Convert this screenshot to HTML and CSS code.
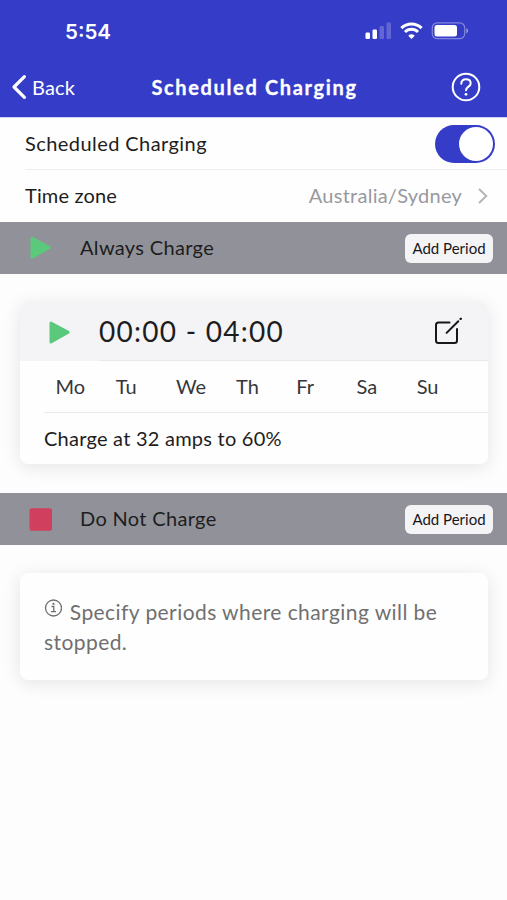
FILE: index.html
```html
<!DOCTYPE html>
<html lang="en">
<head>
<meta charset="utf-8">
<title>Scheduled Charging</title>
<link rel="stylesheet" href="styles.css">
</head>
<body>
<header class="header">
  <div class="status">
    <span class="clock">5:54</span>
    <svg class="status-icons" width="104" height="20" viewBox="0 0 104 20" fill="#fff">
      <rect x="0.5" y="10.5" width="4.5" height="6.5" rx="1.2"/>
      <rect x="7.5" y="7.5" width="4.5" height="9.5" rx="1.2"/>
      <rect x="14.5" y="4" width="4.5" height="13" rx="1.2" opacity=".22"/>
      <rect x="21.5" y="0.5" width="4.5" height="16.5" rx="1.2" opacity=".22"/>
      <g fill="none" stroke="#fff" stroke-width="3">
        <path d="M36.4 6.1a14.3 14.3 0 0 1 20.2 0"/>
        <path d="M40 10a9.2 9.2 0 0 1 13 0"/>
      </g>
      <path d="M46.5 17l-3.2-3.3a4.5 4.5 0 0 1 6.4 0z"/>
      <rect x="67.3" y="0.8" width="32.4" height="15.9" rx="5" fill="none" stroke="#fff" stroke-width="1.2" opacity=".38"/>
      <rect x="69.5" y="3" width="22.5" height="11.5" rx="2.5"/>
      <path d="M101.3 6.2v5.2q1.8-.8 1.8-2.6t-1.8-2.6z" opacity=".5"/>
    </svg>
  </div>
  <nav class="nav">
    <a class="back">
      <svg width="16" height="26" viewBox="0 0 16 26" fill="none" stroke="#fff" stroke-width="3.2" stroke-linecap="round" stroke-linejoin="round"><path d="M13.4 2.6L3 13 13.4 23.4"/></svg>
      <span class="back-label">Back</span>
    </a>
    <h1 class="title">Scheduled Charging</h1>
    <svg class="help" width="30" height="30" viewBox="0 0 30 30" fill="none" stroke="#fff" stroke-width="2" stroke-linecap="round">
      <circle cx="15" cy="15" r="13.3"/>
      <path d="M10.3 11.8q0-4.6 4.7-4.6t4.7 4.2c0 3.2-4.700 3.200-4.700 6.800"/>
      <circle cx="15" cy="22.3" r="1.4" fill="#fff" stroke="none"/>
    </svg>
  </nav>
</header>
<main>
  <div class="row">
    <div class="row-inner ruled"><span class="t-sched">Scheduled Charging</span><span class="toggle"><span class="knob"></span></span></div>
  </div>
  <div class="row">
    <div class="row-inner zone"><span class="t-zone">Time zone</span><span class="value">Australia/Sydney</span>
      <svg width="10" height="16" viewBox="0 0 10 16" fill="none" stroke="#b4b5ba" stroke-width="1.9"><path d="M1 1l7.3 7L1 15"/></svg>
    </div>
  </div>
  <section>
    <div class="bar">
      <svg class="mark" width="24" height="26" viewBox="0 0 24 26"><path d="M3 3.2L20.2 12.5 3 22.3z" fill="#5bc97b" stroke="#5bc97b" stroke-width="3" stroke-linejoin="round"/></svg>
      <h2 class="t-always">Always Charge</h2>
      <button class="add">Add Period</button>
    </div>
    <article class="card period">
      <div class="card-head">
        <svg class="mark" width="24" height="26" viewBox="0 0 24 26"><path d="M3 4L20.2 13.3 3 23z" fill="#5bc97b" stroke="#5bc97b" stroke-width="3" stroke-linejoin="round"/></svg>
        <div class="head-main">
          <span class="time">00:00 - 04:00</span>
          <svg class="edit" width="28" height="28" viewBox="0 0 28 28" fill="none" stroke="#17171b" stroke-width="2" stroke-linecap="round" stroke-linejoin="round"><path d="M15.5 5.500H4.500Q2 5.500 2 8V23.500Q2 26 4.500 26H20.500Q23 26 23 23.500V12M12.600 15.900L24.300 4.200"/><path d="M26.600 1.900l.2-.2" stroke-width="2.300"/></svg>
        </div>
      </div>
      <div class="days"><span>Mo</span><span>Tu</span><span>We</span><span>Th</span><span>Fr</span><span>Sa</span><span>Su</span></div>
      <p class="rate">Charge at 32 amps to 60%</p>
    </article>
  </section>
  <section>
    <div class="bar">
      <svg class="mark" width="24" height="26" viewBox="0 0 24 26"><rect x="0.5" y="2.3" width="22.5" height="22.5" rx="2" fill="#d0405e"/></svg>
      <h2 class="t-dont">Do Not Charge</h2>
      <button class="add">Add Period</button>
    </div>
    <article class="card note">
      <svg class="info" width="18" height="18" viewBox="0 0 18 18" fill="none" stroke="#707070" stroke-width="1.3"><circle cx="9.5" cy="9" r="8"/><path d="M7.5 7.5h2.3v5M7 12.7h5"/><circle cx="9.5" cy="4.9" r="1.1" fill="#707070" stroke="none"/></svg>
      <span class="note-a">Specify periods where charging will be</span><br><span class="note-b">stopped.</span>
    </article>
  </section>
</main>
</body>
</html>
```
FILE: styles.css
```css
* { box-sizing: border-box; margin: 0; }
body { background: #fdfdfd; color: #1d1d20; font: 400 20px/24px Lato, "Open Sans", sans-serif; white-space: nowrap; overflow: hidden; }
svg { display: block; flex: none; }
.header { height: 118px; background: #353cc7; color: #fff; border-bottom: 1px solid #cfd2fb; }
.status { height: 62px; display: flex; justify-content: space-between; align-items: center; padding: 0 38px 0 65px; }
.clock { font: 600 20.5px/24px Inter, sans-serif; padding-top: 1px; }
.status-icons { margin-top: 1px; }
.nav { display: grid; grid-template-columns: 1fr auto 1fr; align-items: center; height: 50px; padding: 0 11px; }
.back { display: flex; align-items: center; gap: 5px; }
.back-label { letter-spacing: .2px; padding-bottom: 1px; }
.title { font-size: 20px; font-weight: 700; line-height: 24px; letter-spacing: 1.65px; margin-right: -2px; padding-bottom: 1px; -webkit-text-stroke: .3px; }
.help { justify-self: end; margin-right: 15px; }
.row { height: 52px; padding-left: 25px; background: #fefefe; }
.row-inner { height: 52px; display: flex; align-items: center; justify-content: space-between; padding-right: 12px; }
.ruled { border-bottom: 1px solid #efeff0; }
.zone { padding-right: 19px; }
.value { margin-left: auto; margin-right: 16px; color: #98999e; letter-spacing: .25px; padding-bottom: 2px; }
.t-sched { letter-spacing: .43px; padding-bottom: 2px; }
.t-zone { letter-spacing: .15px; padding-bottom: 2px; }
.toggle { width: 60px; height: 38px; border-radius: 19px; background: #353cc7; padding: 2px; display: flex; justify-content: flex-end; }
.knob { width: 34px; height: 34px; border-radius: 50%; background: #fff; }
.bar { height: 52px; background: #919299; display: flex; align-items: center; padding: 0 14px 0 29px; }
.bar h2 { font-size: 20px; line-height: 24px; font-weight: 400; margin-left: 27px; padding-bottom: 2px; letter-spacing: .33px; }
.add { margin-left: auto; width: 88px; height: 29px; border: 0; border-radius: 6px; padding: 0 0 1px; background: #f4f4f6; color: #17171b; font: 400 15px/20px Lato, sans-serif; }
.card { margin: 28px 19px 29px 20px; border-radius: 8px; background: #fefefe; box-shadow: 0 3px 18px rgba(0,0,0,.1); overflow: hidden; }
.period { height: 162px; }
.card-head { height: 59px; display: flex; align-items: center; background: #f4f4f6; padding-left: 28px; }
.head-main { flex: 1; height: 59px; display: flex; align-items: center; justify-content: space-between; margin-left: 28px; padding-right: 26px; border-bottom: 1px solid #e9e9eb; }
.time { font-size: 28px; line-height: 34px; letter-spacing: 1.25px; margin-left: -1px; }
.days { display: grid; grid-template-columns: repeat(7, 60.2px); align-items: center; height: 52px; margin-left: 24px; padding: 0 0 2px 11.5px; border-bottom: 1px solid #e8e8e9; color: #36363a; }
.rate { padding-left: 24px; line-height: 51px; letter-spacing: .24px; }
.note { height: 107px; padding: 24px; color: #707070; font-size: 21px; line-height: 30px; letter-spacing: .43px; }
.info { display: inline-block; vertical-align: 3px; margin-right: 2px; }
```
